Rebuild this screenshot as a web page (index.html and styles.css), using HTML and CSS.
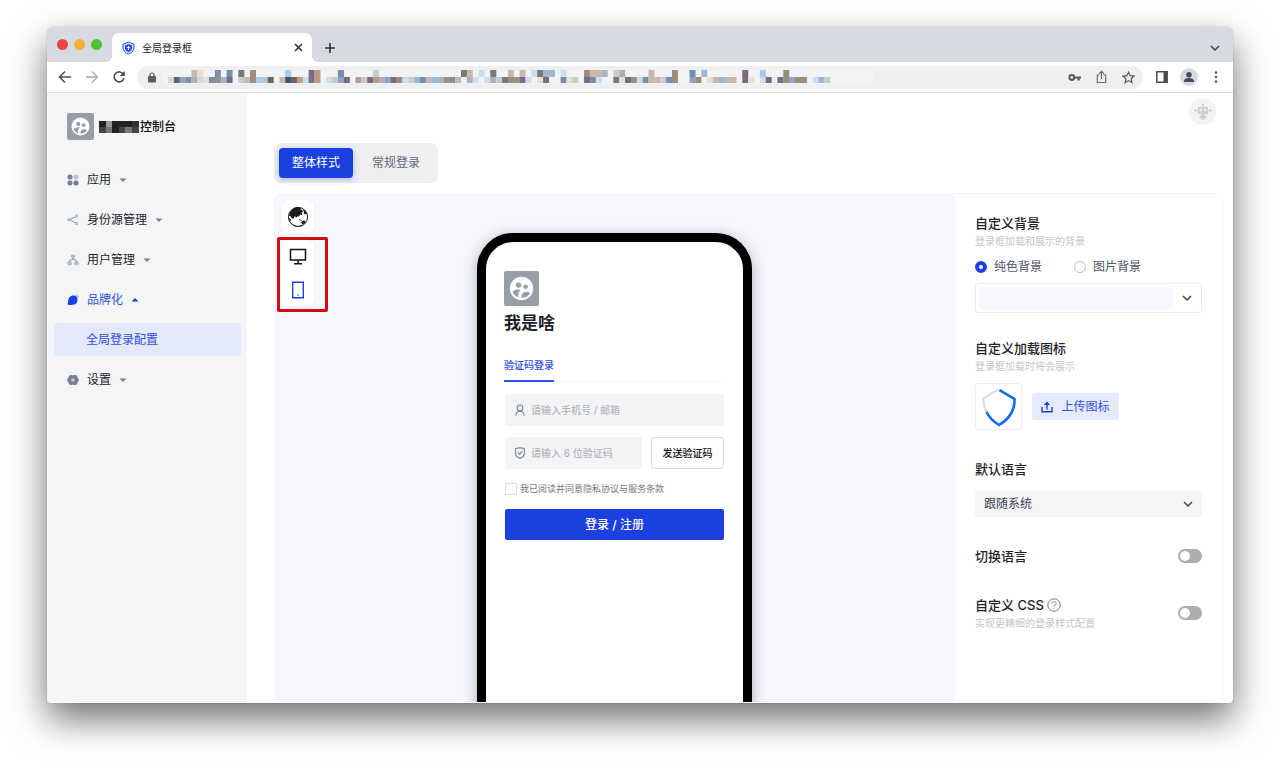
FILE: index.html
```html
<!DOCTYPE html>
<html lang="zh-CN">
<head>
	<meta charset="utf-8">
	<meta name="viewport" content="width=device-width, initial-scale=1">
	<title>全局登录框</title>
	<link rel="stylesheet" href="styles.css">
</head>
<body>
<!-- 公用图标 -->
<svg class="defs" aria-hidden="true">
	<symbol id="chevron" viewBox="0 0 10 10"><path d="M1 3l4 4 4-4" fill="none" stroke="currentColor" stroke-width="1.5"/></symbol>
	<symbol id="caret" viewBox="0 0 8 8"><path d="M.5 2.5h7L4 6z" fill="currentColor"/></symbol>
	<symbol id="team" viewBox="0 0 36 36">
		<circle cx="18" cy="18" r="12" fill="#fff"/>
		<circle cx="15" cy="14.5" r="2.8" fill="#979ea9"/>
		<circle cx="22.2" cy="16.2" r="2.4" fill="#979ea9"/>
		<path d="M8.800 21.400c2-2.200 5.200-2.600 8.500-2.100-2.200 1.400-3 3.600-2.400 8-3-1-5-3-6.100-5.900zM18 27.600c-.5-3.600 1-5.600 4.300-6 2.200-.2 3.800.3 4.400 1.200-1.700 3-4.700 4.800-8.700 4.800z" fill="#979ea9"/>
	</symbol>
</svg>
<div class="window">
	<div class="tabbar">
		<div class="lights"><i class="red"></i><i class="yellow"></i><i class="green"></i></div>
		<div class="tab">
			<svg width="13" height="14" viewBox="0 0 13 14"><path d="M6.500 1l5.500 2.300v3.500c0 3-2.500 5.300-5.500 6.400C3.500 12.100 1 9.800 1 6.800V3.300z" fill="#dfe5ff" stroke="#2b50ee" stroke-width="1"/><path d="M6.500 3L10 4.600v2.600c0 1.800-1.600 3.200-3.500 4-1.900-.8-3.500-2.200-3.500-4V4.600z" fill="#2b50ee"/><path d="M6.500 5v4M5 6.500h3" stroke="#fff" stroke-width="1"/></svg>
			<span class="tab-name">全局登录框</span>
			<button class="tab-close" aria-label="关闭"><svg width="9" height="9" viewBox="0 0 9 9"><path d="M1 1l7 7M8 1L1 8" stroke="#2f3236" stroke-width="1.600"/></svg></button>
		</div>
		<button class="tab-add" aria-label="新标签页"><svg width="12" height="12" viewBox="0 0 12 12"><path d="M6 1v10M1 6h10" stroke="#2f3236" stroke-width="1.600"/></svg></button>
		<button class="tab-more" aria-label="更多标签"><svg width="10" height="10"><use href="#chevron"/></svg></button>
	</div>
	<div class="toolbar">
		<button class="tool" aria-label="后退"><svg width="14" height="14" viewBox="0 0 14 14"><path d="M13 7H2M7 1.500L1.500 7 7 12.500" fill="none" stroke="#494c50" stroke-width="1.500"/></svg></button>
		<button class="tool" aria-label="前进"><svg width="14" height="14" viewBox="0 0 14 14"><path d="M1 7h11M7 1.500L12.500 7 7 12.500" fill="none" stroke="#a7a9ac" stroke-width="1.300"/></svg></button>
		<button class="tool" aria-label="刷新"><svg width="14" height="14" viewBox="0 0 14 14"><path d="M11.600 4.500A5 5 0 1 0 12 8.300" fill="none" stroke="#494c50" stroke-width="1.600"/><path d="M12.800 1v5H7.800z" fill="#494c50"/></svg></button>
		<div class="address">
			<svg width="8" height="11" viewBox="0 0 8 11"><path d="M2 5V3a2 2 0 0 1 4 0v2" fill="none" stroke="#5a5d61" stroke-width="1.200"/><rect y="4" width="8" height="6.500" rx="1" fill="#5a5d61"/></svg>
			<svg class="url" id="url" width="710" height="14" viewBox="0 0 710 14" aria-hidden="true"></svg>
			<button class="tool" aria-label="密码"><svg width="13" height="9" viewBox="0 0 13 9"><circle cx="3.800" cy="4.500" r="2.400" fill="none" stroke="#55585c" stroke-width="2"/><path d="M6 3.500h7v2h-1.300v2H9.500v-2H6z" fill="#55585c"/></svg></button>
			<button class="tool" aria-label="分享"><svg width="11" height="14" viewBox="0 0 11 14"><path d="M3.500 5H1.300v7.500h8.400V5H7.500M5.500 9V1.500M3 3.800l2.500-2.500L8 3.800" fill="none" stroke="#65686c" stroke-width="1.100"/></svg></button>
			<button class="tool" aria-label="收藏"><svg width="13" height="13" viewBox="0 0 13 13"><path d="M6.500 1.200l1.600 3.500 3.800.4-2.800 2.600.8 3.800-3.400-1.900-3.400 1.900.8-3.800L1.100 5.100l3.800-.4z" fill="none" stroke="#55585c" stroke-width="1.200"/></svg></button>
		</div>
		<button class="tool" aria-label="侧边栏"><svg width="12" height="12" viewBox="0 0 12 12"><path d="M.8.8h10.400v10.400H.8z" fill="#fff" stroke="#494c50" stroke-width="1.500"/><path d="M7.500 1H11v10H7.500z" fill="#494c50"/></svg></button>
		<button class="tool" aria-label="用户"><svg width="18" height="18" viewBox="0 0 18 18"><circle cx="9" cy="9" r="9" fill="#d5d9e0"/><circle cx="9" cy="6.800" r="2.700" fill="#424b60"/><path d="M4 14v-1.200c0-1.900 2.200-2.900 5-2.900s5 1 5 2.900V14z" fill="#424b60"/></svg></button>
		<button class="tool" aria-label="菜单"><svg width="4" height="12" viewBox="0 0 4 12" fill="#494c50"><circle cx="2" cy="1.500" r="1.200"/><circle cx="2" cy="6" r="1.200"/><circle cx="2" cy="10.500" r="1.200"/></svg></button>
	</div>

	<div class="page">
		<aside class="sidebar">
			<div class="brand">
				<svg class="logo" width="27" height="27"><use href="#team"/></svg>
				<svg width="40" height="12" viewBox="0 0 40 12" aria-hidden="true"><path d="M0 0h40v12H0z" fill="#222"/><path d="M7 0h6v6H7z" fill="#999"/><path d="M0 6h7v6H0zM20 6h6v6h-6zM33 6h7v6h-7z" fill="#444"/><path d="M7 6h6v6H7zM26 6h7v6h-7z" fill="#777"/><path d="M33 0h7v6h-7z" fill="#333"/></svg>
				<b>控制台</b>
			</div>
			<nav class="nav">
				<a href="#">
					<svg width="12" height="12" viewBox="0 0 12 12" fill="#777f96"><rect x=".5" y=".5" width="5" height="5" rx="2"/><rect x="6.500" y=".5" width="5" height="5" rx="2" fill="#bfc4d0"/><rect x=".5" y="6.500" width="5" height="5" rx="2"/><rect x="6.500" y="6.500" width="5" height="5" rx="2"/></svg>
					应用<svg class="caret" width="8" height="8"><use href="#caret"/></svg>
				</a>
				<a href="#">
					<svg width="12" height="12" viewBox="0 0 12 12" fill="#b5bac5"><path d="M9.500 2L2.500 5.700l7 3.800" fill="none" stroke="#868da0"/><circle cx="9.500" cy="2" r="1.700"/><circle cx="2" cy="5.700" r="1.700"/><circle cx="9.500" cy="9.500" r="1.700"/></svg>
					身份源管理<svg class="caret" width="8" height="8"><use href="#caret"/></svg>
				</a>
				<a href="#">
					<svg width="12" height="12" viewBox="0 0 12 12" fill="#b5bac5"><path d="M6 3v2.500M2.500 8V6.500L6 5l3.500 1.500V8" fill="none" stroke="#868da0"/><rect x="3.800" y=".5" width="4.400" height="3.200" rx="1"/><rect x=".3" y="7.500" width="4.600" height="3.700" rx="1"/><rect x="7.100" y="7.500" width="4.600" height="3.700" rx="1"/></svg>
					用户管理<svg class="caret" width="8" height="8"><use href="#caret"/></svg>
				</a>
				<a href="#" class="open">
					<svg width="12" height="12" viewBox="0 0 12 12"><circle cx="9.800" cy="2.500" r="2" fill="#bcc8f6"/><path d="M6.300 1.500c2.800 0 4.200 2 4.200 4.400 0 2.900-2 4.800-4.600 4.800-2 0-2.900.5-5.100.1C0 10.300 1 9 1.200 6.900 1.400 3.800 3.300 1.500 6.300 1.500z" fill="#1b40df"/></svg>
					品牌化<svg class="caret" width="8" height="8"><use href="#caret"/></svg>
				</a>
				<a href="#" class="sub">全局登录配置</a>
				<a href="#">
					<svg width="12" height="12" viewBox="0 0 12 12"><path d="M4 .8l1.200.5h1.600L8 .8l2 1 .3 1.500L11.700 5v2l-1.400 1.700L10 10.200l-2 1-1.200-.5H5.200L4 11.200l-2-1-.3-1.500L.3 7V5l1.400-1.700L2 1.800z" fill="#777f96"/><circle cx="6" cy="6" r="1.800" fill="#c6cad4"/></svg>
					设置<svg class="caret" width="8" height="8"><use href="#caret"/></svg>
				</a>
			</nav>
		</aside>

		<main class="main">
			<header class="top">
				<button class="robot" aria-label="助手"><svg width="18" height="18" viewBox="0 0 18 18" fill="#cfcfcf"><circle cx="9" cy="1.800" r="1"/><path d="M8.600 2h.8v2h-.8zM4 4h10v7H4zM.8 6h1.400v3H.8zM15.800 6h1.400v3h-1.400zM2.200 7H4v1H2.200zM14 7h1.800v1H14zM7.500 11h3v2h-3zM5.500 12.500h7V15h-1.500v1.500H7V15H5.500z"/><circle cx="6.800" cy="7" r="1.200" fill="#f3f3f3"/><circle cx="11.200" cy="7" r="1.200" fill="#f3f3f3"/></svg></button>
			</header>
			<div class="segment">
				<button class="active">整体样式</button>
				<button>常规登录</button>
			</div>
			<div class="panel">
				<section class="canvas">
					<div class="tools">
						<div class="tool-card">
							<button aria-label="语言"><svg width="22" height="22" viewBox="0 0 22 22"><circle cx="11" cy="11" r="9.600" fill="#fff" stroke="#222" stroke-width="1"/><path d="M2.600 6.500C4.500 3 8 1.300 11 1.300c1.500 0 2.500.2 3.600.6L13 3.500l2 .3 1 2-1.500 1 1 2.200-2.500-.5-1 2.200-1.300-.5-1.500 1.500-1.500-2-.7 2.500-2.200.3L3 9.500l-1.200 1z" fill="#1a1a1a"/><path d="M16 3.200l2.800 2 1.500 3-1-.5-1.800.8zM14 16.300l2.300-1.800 2.200.5-.8 2.500-2.600.7zM1.700 11.500l1.800 1.500L4 15l-1.300.3z" fill="#1a1a1a"/><path d="M12 13.500l2.500 1M4.500 17.500c3 2.900 7 3.800 11 1.500" fill="none" stroke="#333" stroke-width="1"/></svg></button>
						</div>
						<div class="tool-card marked">
							<button aria-label="电脑"><svg width="18" height="18" viewBox="0 0 18 18"><path d="M1.500 1.500h15V12h-15zM9 12v3.500M5 15.800h8" fill="none" stroke="#111" stroke-width="1.500"/></svg></button>
							<button aria-label="手机"><svg width="18" height="18" viewBox="0 0 18 18"><path d="M3.700 1.200h10.600v15.600H3.700z" fill="none" stroke="#1b40df" stroke-width="1.400"/><circle cx="9" cy="14" r=".8" fill="#1b40df"/></svg></button>
						</div>
					</div>
					<div class="phone">
						<svg class="logo" width="35" height="35"><use href="#team"/></svg>
						<h1>我是啥</h1>
						<div class="login-tabs"><button>验证码登录</button></div>
						<form class="login">
							<label class="field">
								<svg width="12" height="12" viewBox="0 0 12 12" fill="none" stroke="#7a7f88" stroke-width="1.100"><circle cx="6" cy="3.800" r="2.800"/><path d="M2 11.500c0-2.600 1.700-4.200 4-4.200s4 1.600 4 4.200"/></svg>
								<input type="text" placeholder="请输入手机号 / 邮箱" aria-label="账号">
							</label>
							<div class="code">
								<label class="field">
									<svg width="12" height="12" viewBox="0 0 12 12" fill="none" stroke="#7a7f88" stroke-width="1.100"><path d="M1.700 1.500L6 .8l4.300.7v5C10.300 9 8 10.600 6 11.400 4 10.600 1.700 9 1.700 6.500zM4 5.500l1.600 1.600L8.300 4.400"/></svg>
									<input type="text" placeholder="请输入 6 位验证码" aria-label="验证码">
								</label>
								<button type="button" class="send">发送验证码</button>
							</div>
							<label class="agree"><input type="checkbox">我已阅读并同意隐私协议与服务条款</label>
							<button type="button" class="submit">登录 / 注册</button>
						</form>
					</div>
				</section>

				<section class="settings">
					<div class="group">
						<h2>自定义背景</h2>
						<p>登录框加载和展示的背景</p>
						<div class="radios">
							<label><input type="radio" name="bg" checked>纯色背景</label>
							<label><input type="radio" name="bg">图片背景</label>
						</div>
						<label class="color">
							<input type="color" value="#f6f7fd" aria-label="背景颜色">
							<svg width="10" height="10"><use href="#chevron"/></svg>
						</label>
					</div>
					<div class="group icon-group">
						<h2>自定义加载图标</h2>
						<p>登录框加载时将会展示</p>
						<div class="upload">
							<div class="preview"><svg width="36" height="40" viewBox="0 0 36 40" fill="none" stroke-width="2.600"><path d="M18 2L2.500 11.500Q2 18 5.500 25" stroke="#dde2e9"/><path d="M18.500 3.200L33.500 12C34 24 28 32 18 38 12 34.500 8 30 5.500 25" stroke="#1268f3"/></svg></div>
							<button><svg width="12" height="12" viewBox="0 0 12 12" fill="none" stroke="#1b40df" stroke-width="1.400"><path d="M1 6v4.800h10V6M6 8.500V2"/><path d="M2.800 4h6.400L6 .5z" fill="#1b40df" stroke="none"/></svg>上传图标</button>
						</div>
					</div>
					<div class="group">
						<h2><label for="lang">默认语言</label></h2>
						<div class="select">
							<select id="lang"><option>跟随系统</option></select>
							<svg width="10" height="10"><use href="#chevron"/></svg>
						</div>
					</div>
					<div class="group row">
						<h2><label for="switch-lang">切换语言</label></h2>
						<input type="checkbox" class="switch" id="switch-lang">
					</div>
					<div class="group row">
						<div>
							<h2><label for="css">自定义 CSS</label><svg width="14" height="14" viewBox="0 0 14 14" fill="none" stroke="#777" stroke-width="1"><circle cx="7" cy="7" r="6.200"/><path d="M5 5.500c.1-2.600 4-2.400 4 0C9 7 7 7 7 8.600M7 9.800v1"/></svg></h2>
							<p>实现更精细的登录样式配置</p>
						</div>
						<input type="checkbox" class="switch" id="css">
					</div>
				</section>
			</div>
		</main>
	</div>
</div>
<script>
	// 地址栏打码色块，每个字符对应一种颜色
	var colors = {
		a: "#c9dfec", k: "#716255", b: "#8fa0c9", s: "#768dab", g: "#b0b0b4", m: "#c9dedb",
		y: "#e8dfcf", t: "#9c8c7b", h: "#a0b6cc", v: "#796b80", l: "#c9cccd", p: "#cab6ac",
		c: "#a9cae2", n: "#3c5470", o: "#be9b85", d: "#777a7c"
	};
	var rows = [
		"....py..s.s.d.t.....c...vo...s.....l..............dp.a.d..p.p.adhh.a...tpph.lg....p...t..s.h......v..c...t",
		"akbsgmysthv.lptcck.pnkoavo.albv.olvogbvtalhsphhtsp.ga.agldttva.yv..syl.vsa..dyvtmspplst..bt.yphpp.vy.av.vtbtt.ahl"
	];
	var url = document.getElementById("url"), html = "<path d='M0 0h710v14H0z' fill='#f2f3f4'/>";
	for(var r = 0; r < rows.length; r++){
		for(var i = 0; i < rows[r].length; i++){
			var c = colors[rows[r][i]];
			if(c){
				html += "<rect x='" + (5 + i * 5.86) + "' y='" + r * 7 + "' width='6' height='" + (7 - r) + "' fill='" + c + "'/>";
			}
		}
	}
	url.innerHTML = html;
</script>
</body>
</html>
```
FILE: styles.css
```css
*, *::before, *::after{
	box-sizing: border-box;
}
body{
	margin: 0;
	padding: 27px 47px 67px;
	background: #fff;
	color: #1d2129;
	font: 12px/20px Inter, "Noto Sans CJK SC", sans-serif;
}
button, input, select{
	font: inherit;
	color: inherit;
	margin: 0;
}
button{
	border: 0;
	padding: 0;
	background: none;
	display: flex;
	align-items: center;
	justify-content: center;
}
a{
	color: inherit;
	text-decoration: none;
}
h1, h2, p{
	margin: 0;
}
svg{
	flex: none;
	display: block;
}
.defs{
	position: absolute;
	width: 0;
	height: 0;
}
/* 浏览器窗口 */
.window{
	height: calc(100vh - 94px);
	display: flex;
	flex-direction: column;
	overflow: hidden;
	border-radius: 6px 6px 4px 4px;
	background: #fff;
	box-shadow: 0 0 1px rgba(0,0,0,.5), 0 16px 36px rgba(0,0,0,.56);
}
.tabbar{
	height: 35px;
	flex: none;
	display: flex;
	align-items: flex-end;
	background: #d7dae0;
}
.lights{
	display: flex;
	gap: 6px;
	padding: 0 10px 12px;
}
.lights i{
	width: 11px;
	height: 11px;
	border-radius: 50%;
}
.lights .red{
	background: #ea4640;
}
.lights .yellow{
	background: #f5b132;
}
.lights .green{
	background: #50c232;
}
.tab{
	position: relative;
	width: 200px;
	height: 29px;
	display: flex;
	align-items: center;
	gap: 7px;
	padding: 0 9px 0 10px;
	border-radius: 7px 7px 0 0;
	background: #fff;
	font-size: 10px;
}
.tab::before, .tab::after{
	content: "";
	position: absolute;
	bottom: 0;
	width: 6px;
	height: 6px;
}
.tab::before{
	right: 100%;
	background: radial-gradient(circle at 0 0, transparent 6px, #fff 6px);
}
.tab::after{
	left: 100%;
	background: radial-gradient(circle at 100% 0, transparent 6px, #fff 6px);
}
.tab-name{
	flex: 1;
}
.tab-close, .tab-add, .tab-more{
	color: #3b3e42;
}
.tab-add{
	height: 29px;
	margin: 0 auto 0 12px;
}
.tab-more{
	height: 29px;
	padding-right: 13px;
}
.toolbar{
	height: 31px;
	flex: none;
	display: flex;
	align-items: center;
	padding: 0 4px;
	border-bottom: 1px solid #dcdde0;
}
.tool{
	width: 27px;
	height: 23px;
	flex: none;
}
.address{
	flex: 1;
	min-width: 0;
	height: 23px;
	display: flex;
	align-items: center;
	margin: 0 5px;
	padding: 0 1px 0 11px;
	border-radius: 12px;
	background: #eeeff1;
}
.url{
	flex: 0 1 auto;
	margin: 0 auto 0 7px;
}
.page{
	flex: 1;
	min-height: 0;
	display: flex;
	border-bottom: 1px solid #fff;
}
/* 侧边栏 */
.sidebar{
	width: 200px;
	flex: none;
	padding-top: 20px;
	background: #f4f5f7;
}
.brand{
	display: flex;
	align-items: center;
	padding-left: 20px;
	color: #111;
}
.brand b{
	margin-left: 1px;
	font-weight: 500;
}
.logo{
	border-radius: 2px;
	background: #979ea9;
}
.brand .logo{
	margin-right: 5px;
}
.nav{
	margin-top: 20px;
}
.nav a{
	height: 40px;
	display: flex;
	align-items: center;
	gap: 8px;
	padding-left: 20px;
}
.nav .caret{
	color: #777f96;
}
.nav .open, .nav .sub{
	color: #3150e0;
}
.nav .open .caret{
	color: #1b40df;
	transform: rotate(180deg);
}
.nav .sub{
	height: 33px;
	margin: 3px 6px 4px 7px;
	padding-left: 32px;
	border-radius: 3px;
	background: #e3e8fd;
}
/* 主区域 */
.main{
	flex: 1;
	min-width: 0;
	display: flex;
	flex-direction: column;
	padding: 0 10px 0 27px;
}
.top{
	height: 50px;
	flex: none;
	display: flex;
	justify-content: flex-end;
	padding: 5px 7px 0 0;
}
.robot{
	width: 27px;
	height: 27px;
	border-radius: 50%;
	background: #f3f3f3;
}
.segment{
	align-self: flex-start;
	display: flex;
	gap: 6px;
	padding: 5px;
	border-radius: 7px;
	background: #eeeff1;
	color: #606a78;
}
.segment button{
	width: 74px;
	height: 30px;
	border-radius: 4px;
}
.segment .active{
	background: #1b40df;
	color: #fff;
	box-shadow: 0 2px 6px rgba(27,64,223,.3);
}
.panel{
	flex: 1;
	min-height: 0;
	display: flex;
	margin-top: 10px;
	border-radius: 7px 7px 0 0;
}
.canvas{
	flex: 1;
	display: flex;
	align-items: flex-start;
	overflow: hidden;
	padding: 7px 39px 0 7px;
	border-radius: 7px 0 0 0;
	background: #f6f7fd;
}
.tools{
	display: flex;
	flex-direction: column;
	gap: 7px;
}
.tool-card{
	position: relative;
	border-radius: 7px;
	background: #fff;
	box-shadow: 0 1px 4px rgba(40,60,140,.06);
}
.tool-card button{
	width: 33px;
	height: 33px;
}
.marked::after{
	content: "";
	position: absolute;
	top: -3px;
	left: -4px;
	width: 51px;
	height: 75px;
	border: 3px solid #d20a14;
	border-radius: 2px;
	pointer-events: none;
}
.phone{
	width: 275px;
	height: 560px;
	margin: 33px auto 0;
	padding: 29px 18px;
	border: 9px solid #000;
	border-radius: 36px;
	background: #fff;
	box-shadow: 0 3px 14px rgba(30,35,60,.35);
}
.phone h1{
	margin-top: 5px;
	font-size: 17px;
	line-height: 24px;
	font-weight: 600;
}
.login-tabs{
	margin-top: 20px;
	border-bottom: 1px solid #f2f3f5;
}
.login-tabs button{
	height: 27px;
	padding-bottom: 5px;
	border-bottom: 2px solid #2b53e6;
	margin-bottom: -1px;
	color: #2b4be0;
	font-size: 10px;
	font-weight: 500;
}
.login{
	padding: 12px 1px 0;
	font-size: 10px;
}
.field{
	flex: 1;
	min-width: 0;
	height: 32px;
	display: flex;
	align-items: center;
	gap: 5px;
	padding: 0 9px;
	border-radius: 3px;
	background: #f3f4f6;
}
.field input{
	width: 100%;
	min-width: 0;
	padding: 0;
	border: 0;
	outline: 0;
	background: none;
}
.field input::placeholder{
	color: #b4b6bb;
	font-weight: 500;
}
.code{
	display: flex;
	gap: 9px;
	margin-top: 11px;
}
.send{
	width: 73px;
	border: 1px solid #dcdee2;
	border-radius: 3px;
	color: #111;
	font-weight: 500;
}
.agree{
	display: flex;
	align-items: center;
	gap: 3px;
	margin: 10px 0;
	color: #777;
	font-size: 9px;
}
.agree input{
	appearance: none;
	width: 12px;
	height: 12px;
	border: 1px solid #dcdee2;
	border-radius: 1px;
	background: #fff;
}
.submit{
	width: 100%;
	height: 31px;
	border-radius: 2px;
	background: #1b40df;
	color: #fff;
	font-size: 12px;
	font-weight: 500;
}
/* 右侧设置 */
.settings{
	width: 269px;
	flex: none;
	padding: 19px 20px 0;
	border: 1px solid #f2f4fa;
	border-bottom: 0;
	border-radius: 0 7px 0 0;
}
.group h2{
	display: flex;
	align-items: center;
	gap: 3px;
	font-size: 13px;
	line-height: 20px;
	font-weight: 500;
}
.group p{
	color: #c3c6cd;
	font-size: 10px;
	line-height: 16px;
}
.group + .group{
	margin-top: 29px;
}
.group + .icon-group{
	margin-top: 25px;
}
.radios{
	display: flex;
	gap: 32px;
	margin: 8px 0 6px;
	color: #4c5566;
}
.radios label{
	display: flex;
	align-items: center;
	gap: 7px;
}
.radios input{
	appearance: none;
	width: 12px;
	height: 12px;
	border: 1px solid #b3b8c2;
	border-radius: 50%;
	background: #fff;
}
.radios input:checked{
	border: 4px solid #1b40f0;
}
.color{
	height: 30px;
	display: flex;
	align-items: center;
	gap: 9px;
	padding: 0 9px 0 3px;
	border: 1px solid #e8eaed;
	border-radius: 3px;
	color: #3c4350;
}
.color input{
	flex: 1;
	height: 22px;
	padding: 0;
	border: 0;
	background: none;
}
.color input::-webkit-color-swatch-wrapper{
	padding: 0;
}
.color input::-webkit-color-swatch{
	border: 0;
	border-radius: 2px;
}
.upload{
	display: flex;
	align-items: center;
	gap: 10px;
	margin-top: 9px;
}
.preview{
	width: 47px;
	height: 47px;
	display: flex;
	align-items: center;
	justify-content: center;
	border: 1px solid #eceef1;
	border-radius: 3px;
}
.upload button{
	width: 87px;
	height: 27px;
	gap: 8px;
	border-radius: 3px;
	background: #e6eafe;
	color: #3150e0;
}
.select{
	height: 27px;
	display: flex;
	align-items: center;
	margin-top: 11px;
	padding: 0 9px;
	border-radius: 3px;
	background: #f4f5f7;
	color: #3c4350;
}
.select select{
	flex: 1;
	appearance: none;
	padding: 0;
	border: 0;
	background: none;
}
.row{
	display: flex;
	align-items: center;
	justify-content: space-between;
}
.switch{
	appearance: none;
	width: 24px;
	height: 14px;
	padding: 2px;
	border-radius: 7px;
	background: #adadad;
}
.switch::before{
	content: "";
	display: block;
	width: 10px;
	height: 10px;
	border-radius: 50%;
	background: #fff;
}
.switch:checked{
	background: #1b40df;
}
.switch:checked::before{
	margin-left: auto;
}
```
